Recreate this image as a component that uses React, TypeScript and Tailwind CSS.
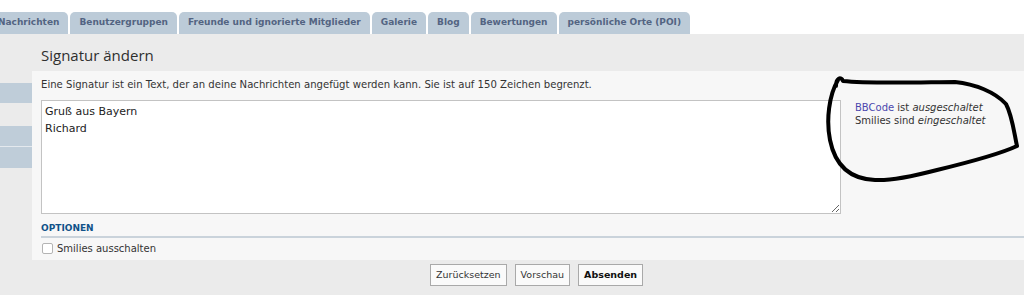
import React from "react";

const tabs = [
  "Nachrichten",
  "Benutzergruppen",
  "Freunde und ignorierte Mitglieder",
  "Galerie",
  "Blog",
  "Bewertungen",
  "persönliche Orte (POI)",
];

const App = () => {
  return (
    <div className="relative h-[295px] w-[1024px] overflow-hidden bg-white font-['DejaVu_Sans',Verdana,sans-serif] text-[#333]">
      {/* tabs */}
      <div className="flex gap-[2px] pt-[12px] ml-[-11px]">
        {tabs.map((t) => (
          <div
            key={t}
            className="h-[22px] flex items-center px-[9px] rounded-t-[5px] bg-[#bccbd8] text-[#536482] text-[9px] font-bold"
          >
            {t}
          </div>
        ))}
      </div>

      {/* gray panel */}
      <div className="bg-[#ebebeb] h-[261px] flex flex-col">
        <h2 className="h-[37px] pl-[41px] pt-[11px] text-[15px] leading-[20px] text-[#2f2f2f] font-['Open_Sans',sans-serif]">
          Signatur ändern
        </h2>
        <div className="flex">
          <div className="w-[32px] flex flex-col pt-[12px]">
            <div className="h-[20px] bg-[#bfcdd9]" />
            <div className="h-[23px]" />
            <div className="h-[21px] bg-[#bfcdd9] border-b border-[#e4e9ee]" />
            <div className="h-[21px] bg-[#bfcdd9]" />
          </div>
          <div className="flex-1 bg-[#f7f7f7] h-[189px] pl-[9px] pt-[7px]">
            <p className="text-[10.1px] leading-[14px]">
              Eine Signatur ist ein Text, der an deine Nachrichten angefügt werden kann. Sie ist auf 150 Zeichen begrenzt.
            </p>
            <div className="flex mt-[8px]">
              <textarea
                readOnly
                defaultValue={"Gruß aus Bayern\nRichard"}
                className="w-[800px] h-[114px] bg-white border border-[#c3c3c3] px-[3px] py-[2px] text-[11px] leading-[17px] text-[#222] font-['DejaVu_Sans',sans-serif] outline-none"
              />
              <div className="pl-[14px] pt-[1px] text-[10px] leading-[13px]">
                <div>
                  <span className="text-[#4c47ae]">BBCode</span> ist <em>ausgeschaltet</em>
                </div>
                <div>
                  Smilies sind <em>eingeschaltet</em>
                </div>
              </div>
            </div>
            <div className="mt-[8px] text-[9px] font-bold text-[#105289] pb-[2px] border-b-2 border-[#cad3db] leading-[12px]">
              OPTIONEN
            </div>
            <label className="flex items-center gap-[4px] mt-[3px] pl-[1px] text-[10px]">
              <span className="w-[11px] h-[11px] rounded-[2px] border border-[#b4b4b4] bg-white" />
              Smilies ausschalten
            </label>
          </div>
        </div>
        <div className="flex gap-[8px] pl-[430px] pt-[4px]">
          <button className="h-[22px] px-[5px] bg-[#fafafa] border border-[#a9a9a9] text-[9.5px] text-[#333]">
            Zurücksetzen
          </button>
          <button className="h-[22px] px-[5px] bg-[#fafafa] border border-[#a9a9a9] text-[9.5px] text-[#333]">
            Vorschau
          </button>
          <button className="h-[22px] px-[5px] bg-[#fafafa] border border-[#a9a9a9] text-[9.5px] font-bold text-[#111]">
            Absenden
          </button>
        </div>
      </div>

      {/* hand-drawn circle */}
      <svg
        className="absolute left-0 top-0 pointer-events-none"
        width="1024"
        height="295"
        viewBox="0 0 1024 295"
      >
        <path
          d="M836 86 C836 78 841 76 843 81 C870 84 930 82 955 82 C975 84 995 92 1006 104 C1012 115 1014 132 1017 146 C1000 154 970 162 937 170 C910 177 890 181 875 180 C850 179 835 165 830 140 C826 120 829 95 838 80"
          fill="none"
          stroke="#000"
          strokeWidth="4"
          strokeLinecap="round"
          strokeLinejoin="round"
        />
      </svg>
    </div>
  );
};

export default App;
